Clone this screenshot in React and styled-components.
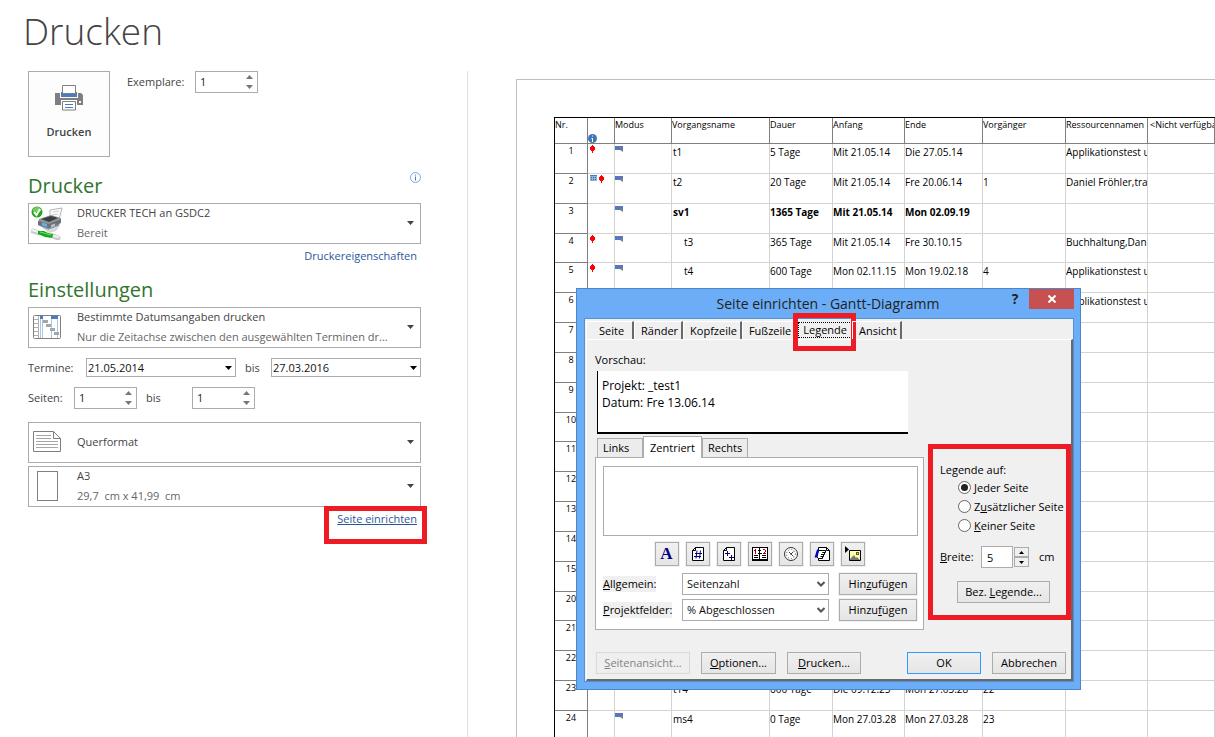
import React from 'react';
import styled, { createGlobalStyle } from 'styled-components';

const GlobalStyle = createGlobalStyle`
  *, *::before, *::after {
    box-sizing: border-box;
  }

  body {
    margin: 0;
    background: #fff;
    color: #444;
    font-family: "Open Sans", "Noto Sans", sans-serif;
    font-size: 11px;
    line-height: 16px;
  }

  button, input, select, textarea {
    margin: 0;
    font: inherit;
    color: inherit;
  }
`;

/* ---------- page ---------- */

const Screen = styled.div`
  position: relative;
  display: flex;
  flex-direction: column;
  height: 100vh;
  overflow: hidden;
`;

const PageTitle = styled.h1`
  margin: 0;
  padding: 4px 23px 13px;
  font-size: 37px;
  font-weight: 300;
  line-height: 54px;
`;

const Columns = styled.div`
  display: flex;
  flex: 1;
  min-height: 0;
`;

const Settings = styled.section`
  flex: 0 0 468px;
  min-width: 0;
  padding: 0 46px 0 28px;
  border-right: 1px solid #e1e1e1;
`;

const PrintRow = styled.div`
  display: flex;
  align-items: flex-start;
`;

const PrintButton = styled.button`
  display: flex;
  flex-direction: column;
  align-items: center;
  gap: 13px;
  width: 82px;
  height: 86px;
  padding: 13px 0 0;
  margin-right: 17px;
  border: 1px solid #ababab;
  background: #fdfdfd;
  font-weight: 600;
`;

const FieldRow = styled.div`
  display: flex;
  align-items: center;
  margin-bottom: ${p => p.$gap || 0}px;
`;

const FieldLabel = styled.label`
  width: ${p => p.$width}px;
  padding-left: ${p => p.$indent || 0}px;
`;

const DateRow = styled.div`
  display: grid;
  grid-template-columns: 58px 1fr 35px 1fr;
  align-items: center;
  margin: 10px 0;
`;

const SpinBox = styled.div`
  display: flex;
  width: 63px;
  height: 22px;
  border: 1px solid #ababab;
  background: #fff;

  input {
    flex: 1;
    min-width: 0;
    padding: 0 4px;
    border: 0;
    background: none;
    color: #222;
  }
`;

const SpinArrows = styled.div`
  display: flex;
  flex-direction: column;
  justify-content: center;
  gap: 1px;
  width: 16px;

  button {
    display: flex;
    align-items: center;
    justify-content: center;
    height: 9px;
    padding: 0;
    border: 0;
    background: none;
  }
`;

const SectionHead = styled.div`
  display: flex;
  justify-content: space-between;
  align-items: flex-start;
  margin: ${p => p.$top}px 0 3px;

  h2 {
    margin: 0;
    font-size: 20px;
    font-weight: 400;
    line-height: 28px;
    color: #31752f;
  }
`;

const Picker = styled.button`
  display: flex;
  align-items: center;
  width: 100%;
  height: 41px;
  padding: 0 6px 2px 2px;
  margin-bottom: ${p => p.$gap || 0}px;
  border: 1px solid #ababab;
  background: #fff;
  text-align: left;
`;

const PickerIcon = styled.span`
  display: flex;
  justify-content: center;
  width: 32px;
  margin-right: 14px;
`;

const PickerText = styled.span`
  flex: 1;
  display: flex;
  flex-direction: column;
  min-width: 0;
  line-height: 20px;
  white-space: pre;

  small {
    font-size: 11px;
    color: #666;
  }
`;

const LinkRow = styled.div`
  display: flex;
  justify-content: flex-end;
  padding: 4px 4px 0;
`;

const TextLink = styled.a`
  position: relative;
  color: #2b579a;
  text-decoration: ${p => (p.$underlined ? 'underline' : 'none')};
`;

const RedFrame = styled.span`
  position: absolute;
  inset: ${p => p.$inset};
  border: 5px solid #ed1c24;
  pointer-events: none;
`;

const SelectWrap = styled.span`
  display: grid;
  align-items: center;

  select, svg {
    grid-area: 1 / 1;
  }

  select {
    width: 100%;
    height: ${p => p.$height}px;
    padding: 0 4px 0 ${p => p.$pad}px;
    border: 1px solid #ababab;
    border-radius: 0;
    background: #fff;
    color: #111;
    appearance: none;
  }

  svg {
    justify-self: end;
    margin-right: 4px;
    pointer-events: none;
  }
`;

/* ---------- preview sheet ---------- */

const Preview = styled.main`
  flex: 1;
  min-width: 0;
  padding: 8px 0 0 48px;
  overflow: hidden;
`;

const Paper = styled.div`
  padding: 37px 0 0 37px;
  border: solid #c0c0c0;
  border-width: 1px 0 0 1px;
`;

const TaskTable = styled.table`
  width: 100%;
  table-layout: fixed;
  border-collapse: separate;
  border-spacing: 0;
  border: solid #000;
  border-width: 1px 0 0 1px;
  color: #000;
  font-size: 10px;
  line-height: 12px;

  th, td {
    padding: 2px 0 0;
    border: solid #d3d3d3;
    border-width: 0 1px 1px 0;
    text-align: left;
    vertical-align: top;
    white-space: nowrap;
    overflow: hidden;
  }

  thead th {
    height: 26px;
    padding-top: 1px;
    border-color: #808080;
    font-size: 9px;
    font-weight: 400;
  }

  thead th:last-child {
    padding-left: 2px;
  }

  tbody th, tbody td {
    height: 30px;
  }

  tbody tr:nth-child(6n + 4) > * {
    height: 29px;
  }

  tbody th {
    padding-top: 1px;
    border-color: #808080;
    font-size: 9px;
    font-weight: 400;
    text-align: center;
  }

  svg {
    display: inline-block;
    vertical-align: top;
  }
`;

const TaskRow = styled.tr`
  td {
    font-weight: ${p => (p.$bold ? 700 : 400)};
  }
`;

const NameCell = styled.td`
  && {
    padding-left: ${p => (p.$indent ? 12 : 1)}px;
  }
`;

const MarkCell = styled.td`
  && {
    padding: 0 0 0 ${p => p.$left}px;
  }
`;

const MarkHead = styled.th`
  &&& {
    padding: 16px 0 0;
  }

  && svg {
    display: block;
  }
`;

/* ---------- dialog ---------- */

const Dialog = styled.section`
  position: absolute;
  left: 576px;
  top: 288px;
  width: 505px;
  padding: 0 6px 7px 7px;
  border: 1px solid #4b87c9;
  background: #6badf6;
  color: #000;
`;

const TitleBar = styled.header`
  display: flex;
  height: 29px;
  color: #222;

  h2 {
    flex: 1;
    margin: 0;
    padding-left: 71px;
    font-size: 14px;
    font-weight: 400;
    line-height: 29px;
    text-align: center;
  }
`;

const HelpButton = styled.button`
  width: 28px;
  height: 20px;
  padding: 0;
  border: 0;
  background: none;
  font-size: 14px;
  font-weight: 700;
`;

const CloseButton = styled.button`
  display: flex;
  align-items: center;
  justify-content: center;
  width: 45px;
  height: 20px;
  padding: 0;
  border: 0;
  background: #c75050;
`;

const Client = styled.div`
  padding: 2px 0 0 1px;
  border: 1px solid #5590d2;
  background: #f0f0f0;
`;

const TabStrip = styled.div`
  display: flex;
  height: 18px;
`;

const Tab = styled.button`
  position: relative;
  padding: 0 3px 0 ${p => (p.$first ? 12 : 6)}px;
  min-width: ${p => (p.$first ? 48 : 0)}px;
  border: solid #fff;
  border-width: 1px 2px 0 1px;
  border-right-color: ${p => (p.$plain ? 'transparent' : '#696969')};
  background: none;
  text-align: left;
  line-height: 17px;
`;

const ActiveTab = styled(Tab)`
  padding: 0 0 0 2px;
  border: 0;

  > span:first-child {
    display: block;
    height: 16px;
    padding: 0 4px;
    border: 1px dotted #000;
    line-height: 13px;
  }
`;

const Sheet = styled.div`
  padding: 12px 0 5px 8px;
  border: 1px solid #fff;
  border-right: 2px solid #696969;
  border-bottom: 2px solid #696969;
`;

const SheetColumns = styled.div`
  display: flex;
  align-items: flex-end;
  gap: 4px;
`;

const EditColumn = styled.div`
  flex: 1;
`;

const LegendPreview = styled.div`
  height: 63px;
  margin: 3px 16px 2px 2px;
  padding: 6px 4px;
  border-left: 1px solid #000;
  border-bottom: 2px solid #000;
  background: #fff;
  font-size: 12px;
  line-height: 17px;
`;

const AlignTabs = styled.div`
  display: flex;
  align-items: flex-end;
  padding-left: 2px;
`;

const AlignTab = styled.button`
  height: ${p => (p.$active ? 22 : 19)}px;
  min-width: 46px;
  margin-bottom: ${p => (p.$active ? -1 : 0)}px;
  padding: 0 ${p => (p.$active ? 6 : 5)}px;
  border: 1px solid #acacac;
  border-bottom: 0;
  background: ${p => (p.$active ? '#fff' : '#ececec')};
  text-align: left;
  line-height: 16px;
`;

const AlignPanel = styled.div`
  padding: 8px 5px 4px 7px;
  border: 1px solid #acacac;
  background: #fff;

  textarea {
    display: block;
    width: 100%;
    height: 70px;
    border: 1px solid #acacac;
    background: #fff;
    resize: none;
  }
`;

const ToolRow = styled.div`
  display: flex;
  justify-content: center;
  gap: 7px;
  margin: 6px 2px 7px 0;
`;

const ToolButton = styled.button`
  display: flex;
  align-items: center;
  justify-content: center;
  width: 24px;
  height: 24px;
  padding: 0;
  border: 1px solid #acacac;
  background: linear-gradient(#f0f0f0, #e5e5e5);
  box-shadow: 0 0 0 1px #f0f0f0;
  color: #000080;
  font-family: "Liberation Serif", serif;
  font-size: 17px;
  font-weight: 700;
`;

const InsertRow = styled.div`
  display: grid;
  grid-template-columns: 69px 1fr 78px;
  column-gap: 10px;
  align-items: center;
  margin: 0 1px 4px 0;

  label {
    justify-self: start;
    background: #f0f0f0;
    white-space: nowrap;
  }
`;

const PushButton = styled.button`
  height: 22px;
  min-width: ${p => p.$width || 74}px;
  padding: 0 7px;
  border: 1px solid ${p => (p.$primary ? '#3399ff' : '#acacac')};
  background: linear-gradient(#f0f0f0, #e5e5e5);
  box-shadow: 0 0 0 1px #f0f0f0;
  white-space: nowrap;

  &:disabled {
    border-color: #d9d9d9;
    background: #efefef;
    color: #838383;
  }
`;

const LegendGroup = styled.fieldset`
  width: 143px;
  height: 176px;
  margin: 0 0 10px;
  padding: 0 0 0 7px;
  border: 5px solid #ed1c24;

  legend {
    float: left;
    width: 100%;
    margin-top: 13px;
    padding: 0;
  }
`;

const Radio = styled.label`
  display: flex;
  align-items: center;
  gap: 3px;
  height: 19px;
  padding-left: 18px;
  clear: both;
  white-space: nowrap;

  input {
    display: grid;
    place-items: center;
    width: 13px;
    height: 13px;
    border: 1px solid #666;
    border-radius: 50%;
    background: #fff;
    appearance: none;
  }

  input:checked::before {
    content: '';
    width: 7px;
    height: 7px;
    border-radius: 50%;
    background: #222;
  }
`;

const WidthRow = styled.div`
  display: flex;
  align-items: center;
  margin: 11px 0 13px;

  label {
    width: 41px;
  }

  input {
    width: 32px;
    height: 22px;
    padding: 0 5px;
    border: 1px solid #acacac;
    background: #fff;
  }

  > span {
    margin-left: 10px;
  }
`;

const Stepper = styled.div`
  display: flex;
  flex-direction: column;
  margin-left: 1px;

  button {
    display: flex;
    align-items: center;
    justify-content: center;
    width: 15px;
    height: 10px;
    padding: 0;
    border: 1px solid #acacac;
    background: #f0f0f0;
  }
`;

const CenterRow = styled.div`
  padding-left: 17px;
`;

const Footer = styled.footer`
  display: flex;
  gap: 11px;
  padding: 0 5px 0 1px;
  margin-top: 22px;
`;

const Spacer = styled.span`
  flex: 1;
`;

/* ---------- icons ---------- */

const Arrow = ({ up, color = '#444', w = 7, h = 4 }) => (
  <svg width={w} height={h} viewBox="0 0 8 4" preserveAspectRatio="none" aria-hidden="true">
    <path d={up ? 'M0 4L4 0L8 4Z' : 'M0 0H8L4 4Z'} fill={color} />
  </svg>
);

const Chevron = () => (
  <svg width="8" height="8" viewBox="0 0 8 8" aria-hidden="true">
    <path d="M0.5 2L4 5.5L7.5 2" fill="none" stroke="#555" strokeWidth="2" />
  </svg>
);

const PrintIcon = () => (
  <svg width="28" height="26" viewBox="0 0 28 26" aria-hidden="true">
    <path d="M0 8h5v5h18V8h3l2 2v10h-6v-5H6v5H0z" fill="#7f7f7f" />
    <path d="M6 7h16v5H6z" fill="#4a7ebb" />
    <path d="M7.500 .5h13v8h-13z" fill="#fff" stroke="#7f7f7f" />
    <path d="M24 16h2v2h-2z" fill="#fff" />
    <path d="M7.500 16.500h13v8.500h-13z" fill="#fff" stroke="#7f7f7f" />
    <path d="M10 19.500h8M10 22.500h8" stroke="#4a7ebb" />
  </svg>
);

const PrinterPhoto = () => (
  <svg width="32" height="34" viewBox="0 0 32 34" aria-hidden="true">
    <path d="M19 4L31 2L28 14L19 15Z" fill="#fafafa" stroke="#b5b5b5" />
    <path d="M22 6L28 5M21 9L27 8" stroke="#d0d0d0" />
    <path d="M8 13L20 9L30 12L28 20L17 24L7 19Z" fill="#8d9498" />
    <path d="M10 13L20 10L27 12L18 16Z" fill="#3b3f43" />
    <path d="M7 15L18 18L30 13V17L18 22L7 19Z" fill="#6b7277" />
    <path d="M11 16.500L16 18V21L11 19.500Z" fill="#5fb2ec" />
    <path d="M20 19L24 17.500V20L20 21.500Z" fill="#b7c3cc" />
    <path d="M10 21L18 24L29 20L25 25L18 27Z" fill="#d5d8da" />
    <path d="M2 25L8 27M22 30L27 32" stroke="#c3ccc9" strokeWidth="5" strokeLinecap="round" />
    <path d="M1 24L7 26M23 30L27 31" stroke="#eef3f1" strokeWidth="2" strokeLinecap="round" />
    <path d="M7 25L13 25L17 27L22 28L21 32L14 31L7 28Z" fill="#17a81c" />
    <path d="M9 26L20 29" stroke="#6ee36d" />
    <circle cx="6" cy="6" r="5.500" fill="#25a51b" />
    <path d="M1.500 5a4.500 4 0 0 1 9 0Q6 7 1.500 5Z" fill="#72cf5d" />
    <path d="M3 6L5.500 9L9 3" fill="none" stroke="#fff" strokeWidth="2" />
  </svg>
);

const DatesIcon = () => (
  <svg width="28" height="24" viewBox="0 0 28 24" aria-hidden="true">
    <rect x=".5" y=".5" width="27" height="23" rx="1" fill="#fff" stroke="#7f7f7f" />
    <path d="M7 1h3v3H7zM18 1h7v3h-7z" fill="#4a7ebb" />
    <path d="M1 4.500h5M1 8.500h5M1 12.500h5M1 16.500h5M1 20.500h5" stroke="#b0b0b0" />
    <path d="M5.500 1v22" stroke="#b0b0b0" />
    <path d="M7.500 4v19M9.500 4v19M18.500 4v19M24.500 4v19" stroke="#a9c6e4" />
    <path d="M10 5h5v3h-5zM13 9h5v3h-5zM17 13h5v3h-5zM21 17h5v3h-5z" fill="#a6a6a6" />
  </svg>
);

const LandscapeIcon = () => (
  <svg width="28" height="21" viewBox="0 0 28 21" aria-hidden="true">
    <path d="M.5 .5H20.500L27.500 7.500V20.500H.5Z" fill="#fff" stroke="#7f7f7f" />
    <path d="M20.500 .5V7.500H27.500" fill="none" stroke="#7f7f7f" />
    <path d="M3 4.500h15M3 7.500h15M3 10.500h22M3 13.500h22M3 16.500h22" stroke="#a6a6a6" />
  </svg>
);

const PaperIcon = () => (
  <svg width="21" height="30" viewBox="0 0 21 30" aria-hidden="true">
    <rect x=".5" y=".5" width="20" height="29" fill="#fff" stroke="#7f7f7f" />
  </svg>
);

const InfoIcon = () => (
  <svg width="11" height="11" viewBox="0 0 11 11" aria-label="Info">
    <circle cx="5.500" cy="5.500" r="5" fill="#fff" stroke="#7ba7dd" />
    <path d="M5.500 2.500v1M5.500 4.500v4" stroke="#4a7ebb" />
  </svg>
);

const InfoDot = () => (
  <svg width="9" height="9" viewBox="0 0 9 9" aria-label="Indikatoren">
    <circle cx="4.500" cy="4.500" r="4.500" fill="#3f76b5" />
    <path d="M4.500 1.500v1M4.500 4v4M3.500 4.500h1" stroke="#fff" />
  </svg>
);

const Person = () => (
  <svg width="7" height="9" viewBox="0 0 7 9" shapeRendering="crispEdges" aria-hidden="true">
    <path d="M3 1h1v1h1v1h1v3H5v1H4v2H3V7H2V6H1V3h1V2h1z" fill="#f00" />
  </svg>
);

const Calendar = () => (
  <svg width="9" height="9" viewBox="0 0 9 9" aria-hidden="true">
    <path d="M1 1h7v6H1z" fill="#8db4de" />
    <path d="M1 1.500h7" stroke="#4a7ebb" />
    <path d="M2 3.500h5M2 5.500h5" stroke="#3d6ba3" strokeDasharray="1 1" />
  </svg>
);

const ModeIcon = () => (
  <svg width="9" height="9" viewBox="0 0 9 9" aria-hidden="true">
    <path d="M0 2h8v4H0z" fill="#4a7ebb" />
    <path d="M0 2h8v1H0z" fill="#7668c8" />
    <path d="M5 6L8 4V8z" fill="#808080" />
  </svg>
);

const pageOutline = 'M5.500 1.500H13.500V14.500H2.500V4.500Z';

const tools = [
  { title: 'Schriftart', art: 'A' },
  {
    title: 'Seitenzahl',
    art: (
      <g>
        <path d={pageOutline} fill="#fff" stroke="#000" />
        <path d="M2.500 4.500H5.500V1.500" fill="none" stroke="#000" />
        <path d="M7 4.500L6 12.500M10.500 4.500L9.500 12.500M5 7.500h7M4 10.500h7" stroke="#000080" />
      </g>
    ),
  },
  {
    title: 'Seitenanzahl',
    art: (
      <g>
        <path d={pageOutline} fill="#fff" stroke="#000" />
        <path d="M2.500 4.500H5.500V1.500" fill="none" stroke="#000" />
        <path d="M6.500 5v5M4 7.500h5M10.500 9v5M8 11.500h5" stroke="#000080" />
      </g>
    ),
  },
  {
    title: 'Datum',
    art: (
      <g shapeRendering="crispEdges">
        <path d="M.5 1.500H15.500V13.500H.5Z" fill="#fff" stroke="#000" />
        <path d="M0 13h16v2H0z" fill="#000" />
        <path d="M7.500 2v12M2 9.500h4M2 11.500h4M10 9.500h4M10 11.500h4M6 4.500h1M8 4.500h1M6 7.500h4" stroke="#000" />
        <path d="M2 4.500h1M3.500 3v5M11 3.500h2M13.500 4v2M12 6.500h1M11 7.500h3" stroke="#a00000" />
      </g>
    ),
  },
  {
    title: 'Uhrzeit',
    art: (
      <g fill="none" stroke="#000">
        <circle cx="8" cy="8" r="6.500" fill="#fff" stroke="#333" />
        <circle cx="8" cy="8" r="4.500" strokeDasharray="1 2" stroke="#555" />
        <path d="M6 6L10.500 10.500M7.500 8.500L10.500 5.500" stroke="#444" />
      </g>
    ),
  },
  {
    title: 'Dateiname',
    art: (
      <g>
        <path d="M4.500 1.500H12.500L15.500 4.500V14.500H4.500Z" fill="#fff" stroke="#000" />
        <path d="M12.500 1.500V4.500H15.500" fill="none" stroke="#000" />
        <path d="M4.500 4.500H11.500V6.500H8.500H10.500V8.500H9.500V10.500H8.500V12.500H4.500L3 11Z" fill="#fff" stroke="#000" />
        <path d="M7 8.500h3M6.500 10.500h3" stroke="#000" />
        <path d="M3 3.500H5L3 11.500H.5Z" fill="#0000d0" />
      </g>
    ),
  },
  {
    title: 'Grafik',
    art: (
      <g>
        <path d="M0 0L4 3.500L0 7Z" fill="#000" />
        <path d="M4.500 4.500H15.500V14.500H4.500Z" fill="#ffffa8" stroke="#000" />
        <path d="M5 14V13L9 9L11 12L12 11L15 14Z" fill="#777" />
        <rect x="11.500" y="6.500" width="2" height="2" fill="#ff0" stroke="#555" />
      </g>
    ),
  },
];

/* ---------- data ---------- */

const columns = ['Modus', 'Vorgangsname', 'Dauer', 'Anfang', 'Ende', 'Vorgänger', 'Ressourcennamen', '<Nicht verfügbar>'];
const columnWidths = [33, 27, 57, 98, 63, 72, 78, 83, 82];

const tasks = [
  { nr: 1, person: true, cells: ['t1', '5 Tage', 'Mit 21.05.14', 'Die 27.05.14', '', 'Applikationstest und'] },
  { nr: 2, calendar: true, person: true, cells: ['t2', '20 Tage', 'Mit 21.05.14', 'Fre 20.06.14', '1', 'Daniel Fröhler,trainer'] },
  { nr: 3, bold: true, cells: ['sv1', '1365 Tage', 'Mit 21.05.14', 'Mon 02.09.19', '', ''] },
  { nr: 4, person: true, indent: true, cells: ['t3', '365 Tage', 'Mit 21.05.14', 'Fre 30.10.15', '', 'Buchhaltung,Dan'] },
  { nr: 5, person: true, indent: true, cells: ['t4', '600 Tage', 'Mon 02.11.15', 'Mon 19.02.18', '4', 'Applikationstest und'] },
  { nr: 6, cells: ['', '', '', '', '', 'Applikationstest und'] },
  ...[7, 8, 9, 10, 11, 12, 13, 14, 15, 20, 21, 22].map(nr => ({ nr, cells: ['', '', '', '', '', ''] })),
  { nr: 23, cells: ['t14', '600 Tage', 'Die 09.12.25', 'Mon 27.03.28', '22', ''] },
  { nr: 24, cells: ['ms4', '0 Tage', 'Mon 27.03.28', 'Mon 27.03.28', '23', ''] },
];

/* ---------- parts ---------- */

const Spin = ({ id, value }) => (
  <SpinBox>
    <input id={id} type="text" defaultValue={value} />
    <SpinArrows>
      <button type="button" aria-label="Mehr"><Arrow up color="#777" /></button>
      <button type="button" aria-label="Weniger"><Arrow color="#777" /></button>
    </SpinArrows>
  </SpinBox>
);

const DropDown = ({ id, value, height, pad = 1, chevron }) => (
  <SelectWrap $height={height} $pad={pad}>
    <select id={id} defaultValue={value}>
      <option>{value}</option>
    </select>
    {chevron ? <Chevron /> : <Arrow color="#000" />}
  </SelectWrap>
);

const Choice = ({ icon, title, note, gap }) => (
  <Picker type="button" aria-haspopup="listbox" $gap={gap}>
    <PickerIcon>{icon}</PickerIcon>
    <PickerText>
      <span>{title}</span>
      {note && <small>{note}</small>}
    </PickerText>
    <Arrow />
  </Picker>
);

const PrintSettings = () => (
  <Settings>
    <PrintRow>
      <PrintButton type="button">
        <PrintIcon />
        Drucken
      </PrintButton>
      <FieldRow>
        <FieldLabel htmlFor="copies" $width={68}>Exemplare:</FieldLabel>
        <Spin id="copies" value="1" />
      </FieldRow>
    </PrintRow>

    <SectionHead $top={15}>
      <h2>Drucker</h2>
      <InfoIcon />
    </SectionHead>
    <Choice icon={<PrinterPhoto />} title="DRUCKER TECH an GSDC2" note="Bereit" />
    <LinkRow>
      <TextLink href="#eigenschaften">Druckereigenschaften</TextLink>
    </LinkRow>

    <SectionHead $top={12}>
      <h2>Einstellungen</h2>
    </SectionHead>
    <Choice
      icon={<DatesIcon />}
      title="Bestimmte Datumsangaben drucken"
      note="Nur die Zeitachse zwischen den ausgewählten Terminen dr..."
    />
    <DateRow>
      <label htmlFor="from">Termine:</label>
      <DropDown id="from" value="21.05.2014" height={19} />
      <FieldLabel htmlFor="to" $width={35} $indent={9}>bis</FieldLabel>
      <DropDown id="to" value="27.03.2016" height={19} />
    </DateRow>
    <FieldRow $gap={13}>
      <FieldLabel htmlFor="first" $width={46}>Seiten:</FieldLabel>
      <Spin id="first" value="1" />
      <FieldLabel htmlFor="last" $width={55} $indent={9}>bis</FieldLabel>
      <Spin id="last" value="1" />
    </FieldRow>
    <Choice icon={<LandscapeIcon />} title="Querformat" gap={3} />
    <Choice icon={<PaperIcon />} title="A3" note="29,7  cm x 41,99  cm" />
    <LinkRow>
      <TextLink href="#seite" $underlined>
        Seite einrichten
        <RedFrame $inset="-5px -10px -17px -13px" />
      </TextLink>
    </LinkRow>
  </Settings>
);

const TaskSheet = () => (
  <Preview>
    <Paper>
      <TaskTable>
        <colgroup>
          {columnWidths.map((w, i) => <col key={i} width={w} />)}
          <col />
        </colgroup>
        <thead>
          <tr>
            <th>Nr.</th>
            <MarkHead><InfoDot /></MarkHead>
            {columns.map(c => <th key={c}>{c}</th>)}
          </tr>
        </thead>
        <tbody>
          {tasks.map(t => (
            <TaskRow key={t.nr} $bold={t.bold}>
              <th scope="row">{t.nr}</th>
              <MarkCell $left={1}>
                {t.calendar && <Calendar />}
                {t.person && <Person />}
              </MarkCell>
              <MarkCell $left={0}><ModeIcon /></MarkCell>
              <NameCell $indent={t.indent}>{t.cells[0]}</NameCell>
              {t.cells.slice(1).map((c, i) => <td key={i}>{c}</td>)}
              <td />
            </TaskRow>
          ))}
        </tbody>
      </TaskTable>
    </Paper>
  </Preview>
);

const PageSetupDialog = () => (
  <Dialog role="dialog" aria-labelledby="dialog-title">
    <TitleBar>
      <h2 id="dialog-title">Seite einrichten - Gantt-Diagramm</h2>
      <HelpButton type="button">?</HelpButton>
      <CloseButton type="button" aria-label="Schließen">
        <svg width="8" height="8" viewBox="0 0 8 8" aria-hidden="true">
          <path d="M.5 .5L7.500 7.500M7.500 .5L.5 7.500" stroke="#fff" strokeWidth="2" />
        </svg>
      </CloseButton>
    </TitleBar>
    <Client>
      <TabStrip>
        <Tab type="button" $first>Seite</Tab>
        <Tab type="button">Ränder</Tab>
        <Tab type="button">Kopfzeile</Tab>
        <Tab type="button" $plain>Fußzeile</Tab>
        <ActiveTab type="button">
          <span>Legende</span>
          <RedFrame $inset="-8px -4px -12px -3px" />
        </ActiveTab>
        <Tab type="button">Ansicht</Tab>
      </TabStrip>
      <Sheet>
        <SheetColumns>
          <EditColumn>
            <div>Vorschau:</div>
            <LegendPreview>
              Projekt: _test1<br />
              Datum: Fre 13.06.14
            </LegendPreview>
            <AlignTabs>
              <AlignTab type="button">Links</AlignTab>
              <AlignTab type="button" $active>Zentriert</AlignTab>
              <AlignTab type="button">Rechts</AlignTab>
            </AlignTabs>
            <AlignPanel>
              <textarea aria-label="Legendentext" />
              <ToolRow>
                {tools.map(({ title, art }) => (
                  <ToolButton key={title} type="button" aria-label={title}>
                    {typeof art === 'string' ? art : (
                      <svg width="16" height="16" viewBox="0 0 16 16" aria-hidden="true">{art}</svg>
                    )}
                  </ToolButton>
                ))}
              </ToolRow>
              <InsertRow>
                <label htmlFor="general"><u>A</u>llgemein:</label>
                <DropDown id="general" value="Seitenzahl" height={22} pad={4} chevron />
                <PushButton type="button">Hin<u>z</u>ufügen</PushButton>
              </InsertRow>
              <InsertRow>
                <label htmlFor="fields"><u>P</u>rojektfelder:</label>
                <DropDown id="fields" value="% Abgeschlossen" height={22} pad={4} chevron />
                <PushButton type="button">Hinzu<u>f</u>ügen</PushButton>
              </InsertRow>
            </AlignPanel>
          </EditColumn>
          <LegendGroup>
            <legend>Legende auf:</legend>
            <Radio><input type="radio" name="legend" defaultChecked /><span><u>J</u>eder Seite</span></Radio>
            <Radio><input type="radio" name="legend" /><span>Z<u>u</u>sätzlicher Seite</span></Radio>
            <Radio><input type="radio" name="legend" /><span><u>K</u>einer Seite</span></Radio>
            <WidthRow>
              <label htmlFor="width"><u>B</u>reite:</label>
              <input id="width" type="text" defaultValue="5" />
              <Stepper>
                <button type="button" aria-label="Breiter"><Arrow up color="#000" w={5} h={3} /></button>
                <button type="button" aria-label="Schmaler"><Arrow color="#000" w={5} h={3} /></button>
              </Stepper>
              <span>cm</span>
            </WidthRow>
            <CenterRow>
              <PushButton type="button" $width={93}>Bez. <u>L</u>egende...</PushButton>
            </CenterRow>
          </LegendGroup>
        </SheetColumns>
        <Footer>
          <PushButton type="button" $width={94} disabled><u>S</u>eitenansicht...</PushButton>
          <PushButton type="button" $width={75}><u>O</u>ptionen...</PushButton>
          <PushButton type="button"><u>D</u>rucken...</PushButton>
          <Spacer />
          <PushButton type="button" $primary>OK</PushButton>
          <PushButton type="button">Abbrechen</PushButton>
        </Footer>
      </Sheet>
    </Client>
  </Dialog>
);

const App = () => (
  <Screen>
    <GlobalStyle />
    <PageTitle>Drucken</PageTitle>
    <Columns>
      <PrintSettings />
      <TaskSheet />
    </Columns>
    <PageSetupDialog />
  </Screen>
);

export default App;
